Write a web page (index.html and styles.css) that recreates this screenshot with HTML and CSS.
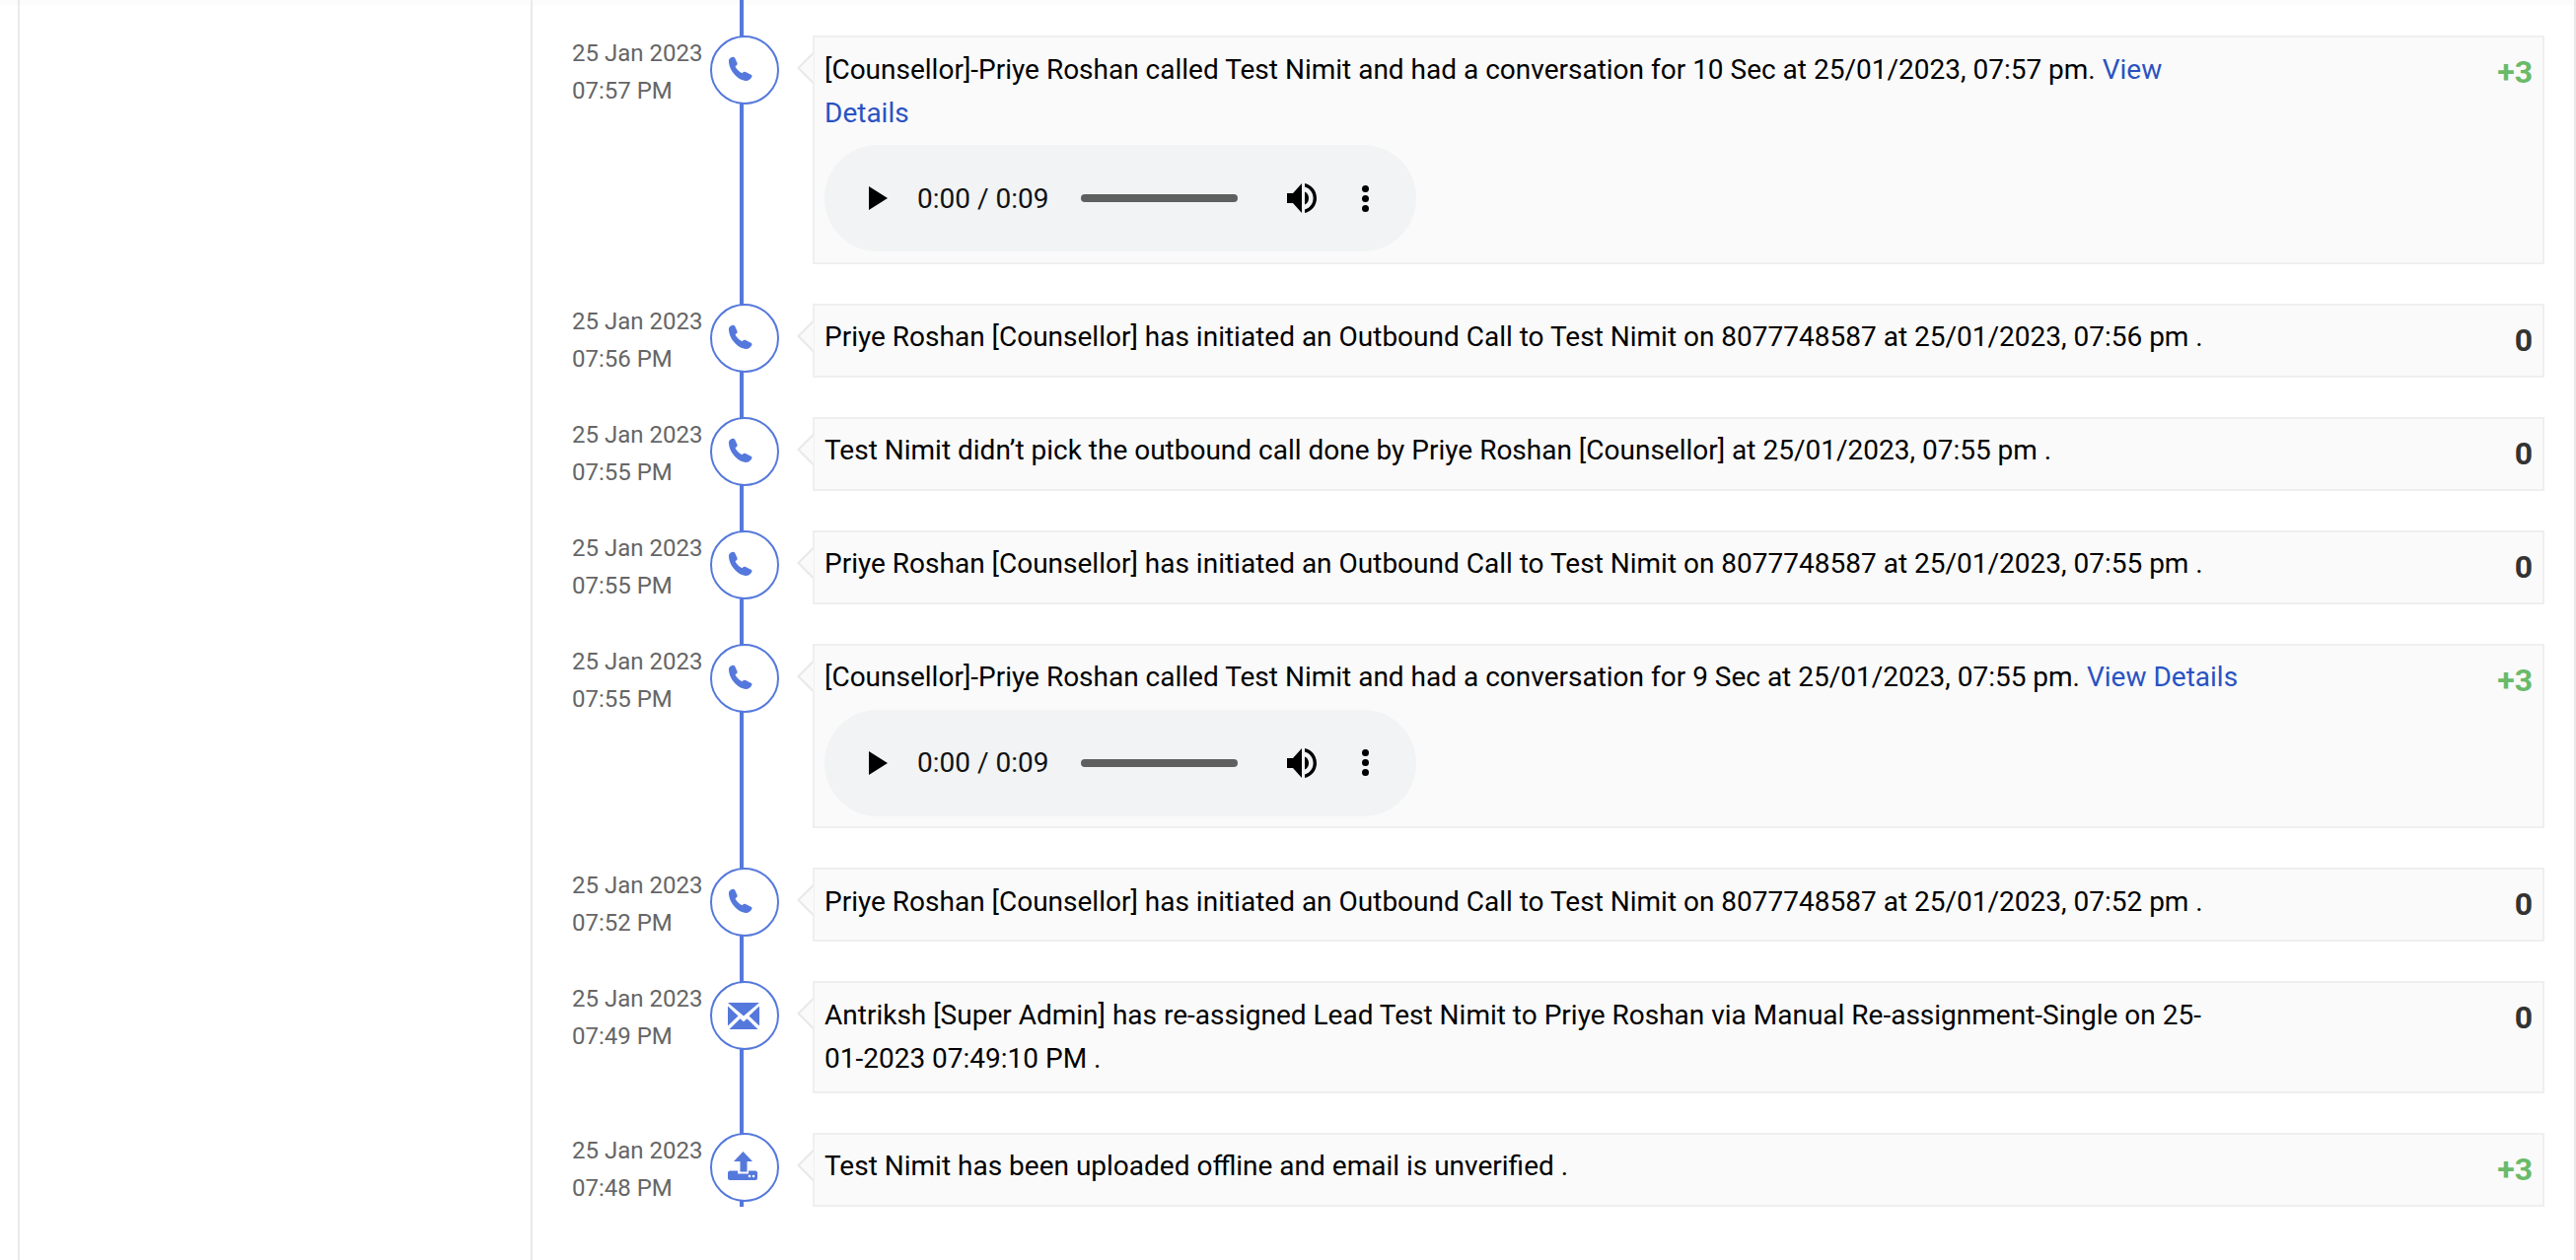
FILE: index.html
```html
<!DOCTYPE html>
<html lang="en">
<head>
<meta charset="utf-8">
<title>Lead timeline</title>
<link rel="stylesheet" href="styles.css">
</head>
<body>
<svg class="defs" width="0" height="0" aria-hidden="true">
  <symbol id="i-phone" viewBox="0 0 25 25"><path d="M1 4C1.500 2.500 3.500.8 5.500.8c1 0 1.500.7 2 1.700l2 4.500c.5 1 0 1.800-1 2.500l-1 .8c1 2.700 4 5.700 7 7l1-1c.8-.8 1.500-.8 2.500-.3l5.500 2.800c1 .5 1.300 1.200.8 2.200-1.300 2.500-3.800 4-5.800 4C10 24.500.5 14 1 4z"/></symbol>
  <symbol id="i-mail" viewBox="0 0 32 27"><path d="M0 0h32L16 13.500z"/><path d="M0 3.500v20L10.500 13.500z"/><path d="M32 3.500v20L21.500 13.500z"/><path d="M1.500 27L12.500 16.300 16 19.300l3.500-3L30.500 27z"/></symbol>
  <symbol id="i-upload" viewBox="0 0 30 29"><path d="M15.500 0l9.500 10h-5.500v10.500h-7V10H6z"/><path d="M2 19.500h8v3h11v-3h7c1 0 2 1 2 2v5.500c0 1-1 2-2 2H2c-1 0-2-1-2-2v-5.500c0-1 1-2 2-2z"/><circle class="hole" cx="22" cy="25" r="1.300"/><circle class="hole" cx="26" cy="25" r="1.300"/></symbol>
  <symbol id="i-play" viewBox="0 0 19 24"><path d="M0 0l19 12L0 24z"/></symbol>
  <symbol id="i-volume" viewBox="0 0 30 30"><path d="M0 10h6l9-10v30l-9-10H0z"/><path d="M18 8.500c2.500 1 4 3.500 4 6.500s-1.500 5.500-4 6.500z"/><path d="M18 0c7 1.500 12 7.500 12 15s-5 13.500-12 15v-3.500c5-1.400 8.600-6 8.600-11.500S23 4.900 18 3.500z"/></symbol>
</svg>
<div class="page">
  <aside class="sidebar"></aside>
  <main class="content">
    <ol class="timeline">
      <li class="entry entry-first">
        <div class="when"><span>25 Jan 2023</span><span>07:57 PM</span></div>
        <div class="node"><svg class="ico ico-phone"><use href="#i-phone"/></svg></div>
        <div class="panel">
          <div class="body">
            <p class="msg">[Counsellor]-Priye Roshan called Test Nimit and had a conversation for 10 Sec at 25/01/2023, 07:57 pm. <a class="link">View</a> <a class="link">Details</a></p>
            <div class="player">
              <svg class="play"><use href="#i-play"/></svg>
              <span class="time">0:00 / 0:09</span>
              <span class="track"></span>
              <svg class="vol"><use href="#i-volume"/></svg>
              <span class="more"><i></i><i></i><i></i></span>
            </div>
          </div>
          <div class="score plus">+3</div>
        </div>
      </li>
      <li class="entry">
        <div class="when"><span>25 Jan 2023</span><span>07:56 PM</span></div>
        <div class="node"><svg class="ico ico-phone"><use href="#i-phone"/></svg></div>
        <div class="panel">
          <div class="body"><p class="msg">Priye Roshan [Counsellor] has initiated an Outbound Call to Test Nimit on 8077748587 at 25/01/2023, 07:56 pm .</p></div>
          <div class="score">0</div>
        </div>
      </li>
      <li class="entry">
        <div class="when"><span>25 Jan 2023</span><span>07:55 PM</span></div>
        <div class="node"><svg class="ico ico-phone"><use href="#i-phone"/></svg></div>
        <div class="panel">
          <div class="body"><p class="msg">Test Nimit didn’t pick the outbound call done by Priye Roshan [Counsellor] at 25/01/2023, 07:55 pm .</p></div>
          <div class="score">0</div>
        </div>
      </li>
      <li class="entry">
        <div class="when"><span>25 Jan 2023</span><span>07:55 PM</span></div>
        <div class="node"><svg class="ico ico-phone"><use href="#i-phone"/></svg></div>
        <div class="panel">
          <div class="body"><p class="msg">Priye Roshan [Counsellor] has initiated an Outbound Call to Test Nimit on 8077748587 at 25/01/2023, 07:55 pm .</p></div>
          <div class="score">0</div>
        </div>
      </li>
      <li class="entry">
        <div class="when"><span>25 Jan 2023</span><span>07:55 PM</span></div>
        <div class="node"><svg class="ico ico-phone"><use href="#i-phone"/></svg></div>
        <div class="panel">
          <div class="body">
            <p class="msg">[Counsellor]-Priye Roshan called Test Nimit and had a conversation for 9 Sec at 25/01/2023, 07:55 pm. <a class="link">View Details</a></p>
            <div class="player">
              <svg class="play"><use href="#i-play"/></svg>
              <span class="time">0:00 / 0:09</span>
              <span class="track"></span>
              <svg class="vol"><use href="#i-volume"/></svg>
              <span class="more"><i></i><i></i><i></i></span>
            </div>
          </div>
          <div class="score plus">+3</div>
        </div>
      </li>
      <li class="entry">
        <div class="when"><span>25 Jan 2023</span><span>07:52 PM</span></div>
        <div class="node"><svg class="ico ico-phone"><use href="#i-phone"/></svg></div>
        <div class="panel">
          <div class="body"><p class="msg">Priye Roshan [Counsellor] has initiated an Outbound Call to Test Nimit on 8077748587 at 25/01/2023, 07:52 pm .</p></div>
          <div class="score">0</div>
        </div>
      </li>
      <li class="entry">
        <div class="when"><span>25 Jan 2023</span><span>07:49 PM</span></div>
        <div class="node"><svg class="ico ico-mail"><use href="#i-mail"/></svg></div>
        <div class="panel">
          <div class="body"><p class="msg">Antriksh [Super Admin] has re-assigned Lead Test Nimit to Priye Roshan via Manual Re-assignment-Single on 25-01-2023 07:49:10 PM .</p></div>
          <div class="score">0</div>
        </div>
      </li>
      <li class="entry">
        <div class="when"><span>25 Jan 2023</span><span>07:48 PM</span></div>
        <div class="node"><svg class="ico ico-upload"><use href="#i-upload"/></svg></div>
        <div class="panel">
          <div class="body"><p class="msg">Test Nimit has been uploaded offline and email is unverified .</p></div>
          <div class="score plus">+3</div>
        </div>
      </li>
    </ol>
  </main>
</div>
</body>
</html>
```
FILE: styles.css
```css
* { box-sizing: border-box; }
html, body { margin: 0; padding: 0; height: 100%; }
body {
  font-family: Roboto, "Liberation Sans", sans-serif;
  color: #000;
  overflow: hidden;
  background: #fff linear-gradient(#fcfcfc, #fcfcfc) no-repeat top / 100% 5px;
}
.defs { display: block; height: 0; }
.page {
  display: flex;
  height: 1278px;
  margin-left: 18px;
  border-left: 2px solid #e9e9e9;
  border-right: 2px solid #e9e9e9;
}
.sidebar { flex: 0 0 520px; border-right: 2px solid #e9e9e9; }
.content { flex: 1; min-width: 0; padding: 36px 30px 0 41px; }
.timeline { position: relative; list-style: none; margin: 0; padding: 0; }
.timeline::before {
  content: "";
  position: absolute;
  left: 169px;
  top: -36px;
  bottom: 0;
  width: 4px;
  background: #5578dc;
}
.entry { display: flex; align-items: flex-start; position: relative; margin-bottom: 40px; }
.entry:last-child { margin-bottom: 0; }
.when {
  flex: 0 0 140px;
  display: flex;
  flex-direction: column;
  margin: -1px 0 0 -1px;
  font-size: 24px;
  line-height: 38px;
  color: #666;
  white-space: nowrap;
}
.node {
  flex: 0 0 70px;
  height: 70px;
  border-radius: 50%;
  border: 2px solid #5578dc;
  background: #fff;
  display: flex;
  align-items: center;
  justify-content: center;
  position: relative;
}
.ico { fill: #5578dc; display: block; }
.ico-phone { width: 25px; height: 25px; margin: -3px 0 0 -9px; }
.ico-mail { width: 32px; height: 27px; margin-left: -2px; }
.ico-upload { width: 30px; height: 29px; margin: -3px 0 0 -4px; }
.hole { fill: #fff; }
.panel {
  flex: 1;
  min-width: 0;
  min-height: 75px;
  margin-left: 34px;
  display: flex;
  position: relative;
  background: #fafafa;
  border: 2px solid #efefef;
  padding: 0 10px;
}
.panel::before, .panel::after {
  content: "";
  position: absolute;
  width: 0;
  height: 0;
  border-style: solid;
  border-color: transparent;
}
.panel::before { left: -18px; top: 15px; border-width: 16px 16px 16px 0; border-right-color: #e9e9e9; }
.panel::after { left: -15.500px; top: 17px; border-width: 14px 14px 14px 0; border-right-color: #fafafa; }
.body { flex: 0 0 1435px; }
.msg { margin: 0; padding: 10.500px 0 9.400px; font-size: 28px; line-height: 44.800px; }
.link { color: #2b52c2; }
.score { margin-left: auto; font-size: 32px; line-height: 44px; font-weight: 700; color: #333; padding-top: 13px; }
.score.plus { color: #6aba6a; }
.player {
  display: flex;
  align-items: center;
  width: 600px;
  height: 108px;
  margin-bottom: 10.500px;
  padding-left: 45px;
  border-radius: 54px;
  background: #f1f3f4;
}
.play { width: 19px; height: 24px; fill: #000; }
.time { margin-left: 30px; width: 134px; font-size: 28px; color: #111; white-space: nowrap; }
.track { margin-left: 32px; width: 159px; height: 8px; border-radius: 4px; background: #5f5f5f; }
.vol { margin-left: 50px; width: 30px; height: 30px; fill: #000; }
.more { margin-left: 45px; width: 10px; display: flex; flex-direction: column; gap: 3px; }
.more i { width: 7px; height: 7px; margin-left: 1px; border-radius: 50%; background: #000; }
```
